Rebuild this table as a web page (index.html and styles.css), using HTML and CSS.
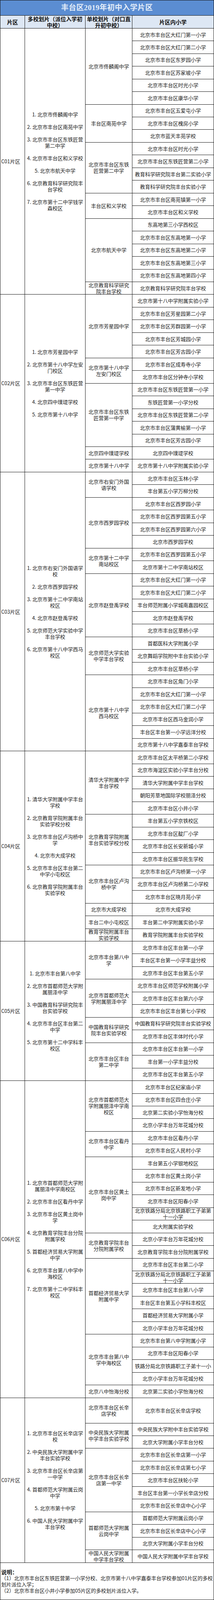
FILE: index.html
```html
<!DOCTYPE html>
<html lang="zh-CN">
<head>
<meta charset="utf-8">
<title>丰台区2019年初中入学片区</title>
<link rel="stylesheet" href="styles.css">
</head>
<body>
<div class="sheet">
<div class="grid">
<div class="title">丰台区2019年初中入学片区</div>
<div class="h col1">片区</div>
<div class="h col2">多校划片（派位入学初中校）</div>
<div class="h col3">单校划片（对口直升初中校）</div>
<div class="h col4">片区内小学</div>

<!-- C01 -->
<div class="zone s21">C01片区</div>
<div class="multi s21"><p>1. 北京市佟麟阁中学</p><p>2. 北京市丰台区南苑中学</p><p>3. 北京市丰台区东铁匠营第二中学</p><p>4. 北京市丰台区和义学校</p><p>5. 北京市航天中学</p><p>6. 北京教育科学研究院丰台学校</p><p>7. 北京市第十二中学钱学森校区</p></div>
<div class="single s6">北京市佟麟阁中学</div>
<div class="pri">北京市丰台区大红门第一小学</div>
<div class="pri">北京市丰台区大红门第二小学</div>
<div class="pri">北京市丰台区东罗园小学</div>
<div class="pri">北京市丰台区苏家坡小学</div>
<div class="pri">北京市丰台区时光小学</div>
<div class="pri">北京市丰台区康华小学</div>
<div class="single s3">丰台区南苑中学</div>
<div class="pri">北京市丰台区五爱屯小学</div>
<div class="pri">北京市丰台区槐房小学</div>
<div class="pri">北京市蓝天丰苑学校</div>
<div class="single s4">北京市丰台区东铁匠营第二中学</div>
<div class="pri">北京市丰台区时光小学</div>
<div class="pri">北京市丰台区东铁匠营第二小学</div>
<div class="pri">教育科学研究院丰台第二实验小学</div>
<div class="pri">教育科学研究院丰台实验小学</div>
<div class="single s2">丰台区和义学校</div>
<div class="pri">北京市丰台区南苑镇第一小学</div>
<div class="pri">北京市丰台区和义学校</div>
<div class="single s5">北京市航天中学</div>
<div class="pri">东高地第三小学西校区</div>
<div class="pri">北京市丰台区东高地第一小学</div>
<div class="pri">北京市丰台区东高地第二小学</div>
<div class="pri">北京市丰台区东高地第三小学</div>
<div class="pri">北京市丰台区东高地第四小学</div>
<div class="single">北京教育科学研究院丰台学校</div>
<div class="pri">北京教育科学研究院丰台学校</div>

<!-- C02 -->
<div class="zone s14">C02片区</div>
<div class="multi s14"><p>1. 北京市芳星园中学</p><p>2. 北京市第十八中学左安门校区</p><p>3. 北京市丰台区东铁匠营第一中学</p><p>4. 北京四中璞瑅学校</p><p>5. 北京市第十八中学</p></div>
<div class="single s5">北京市芳星园中学</div>
<div class="pri">北京市第十八中学附属实验小学</div>
<div class="pri">北京市丰台区芳星园第二小学</div>
<div class="pri">北京市丰台区芳群园第一小学</div>
<div class="pri">北京市丰台区芳城园小学</div>
<div class="pri">北京市丰台区芳古园小学</div>
<div class="single s2">北京市第十八中学左安门校区</div>
<div class="pri">北京市丰台区成寿寺小学</div>
<div class="pri">北京市丰台区分钟寺小学校</div>
<div class="single s5">北京市丰台区东铁匠营第一中学</div>
<div class="pri">北京市丰台区东铁匠营第一小学</div>
<div class="pri">东铁匠营第一小学分校</div>
<div class="pri">北京市丰台区东铁匠营第二小学</div>
<div class="pri">北京市丰台区蒲黄榆第一小学</div>
<div class="pri">北京市丰台区芳古园小学</div>
<div class="single">北京四中璞瑅学校</div>
<div class="pri">北京四中璞瑅学校</div>
<div class="single">北京市第十八中学</div>
<div class="pri">北京市第十八中学附属实验小学</div>

<!-- C03 -->
<div class="zone s22">C03片区</div>
<div class="multi s22"><p>1. 北京市右安门外国语学校</p><p>2. 北京市西罗园学校</p><p>3. 北京市第十二中学南站校区</p><p>4. 北京市赵登禹学校</p><p>5. 北京师范大学实验中学丰台学校</p><p>6. 北京市第十八中学西马校区</p></div>
<div class="single s2">北京市右安门外国语学校</div>
<div class="pri">北京市丰台区玉林小学</div>
<div class="pri">丰台第五小学万柳分校</div>
<div class="single s4">北京市西罗园学校</div>
<div class="pri">北京市丰台区西罗园小学</div>
<div class="pri">北京市丰台区西罗园第五小学</div>
<div class="pri">北京市丰台区西罗园第六小学</div>
<div class="pri">北京市西罗园学校</div>
<div class="single s2">北京市第十二中学南站校区</div>
<div class="pri">北京市丰台区西罗园第五小学</div>
<div class="pri">北京市第十二中学南站校区</div>
<div class="single s5">北京市赵登禹学校</div>
<div class="pri">北京市丰台区大红门第一小学</div>
<div class="pri">北京市丰台区大红门第二小学</div>
<div class="pri">丰台师范附属小学城南嘉园校区</div>
<div class="pri">北京市赵登禹学校</div>
<div class="pri">北京市丰台区草桥小学</div>
<div class="single s3">北京师范大学实验中学丰台学校</div>
<div class="pri">首都医科大学附属小学</div>
<div class="pri">北京舞蹈学院附中丰台实验小学</div>
<div class="pri">北京市丰台区草桥小学</div>
<div class="single s6">北京市第十八中学西马校区</div>
<div class="pri">北京市丰台区角门小学</div>
<div class="pri">北京市丰台区大红门第一小学</div>
<div class="pri">北京市丰台区大红门第二小学</div>
<div class="pri">北京市丰台区西马金润小学</div>
<div class="pri">丰台区丰台第一小学远洋分校</div>
<div class="pri">北京市第十八中学嘉泰丰台学校</div>

<!-- C04 -->
<div class="zone s15">C04片区</div>
<div class="multi s15"><p>1. 清华大学附属中学丰台学校</p><p>2. 北京教育学院附属丰台实验学校分校</p><p>3. 北京市丰台区卢沟桥中学</p><p>4. 北京市大成学校</p><p>5. 北京市丰台区丰台第二中学小屯校区</p><p>6. 北京教育学院附属丰台实验学校</p></div>
<div class="single s5">清华大学附属中学丰台学校</div>
<div class="pri">北京市丰台区太平桥第二小学校</div>
<div class="pri">北京市海淀区实验小学丰台分校</div>
<div class="pri">清华大学附属中学丰台学校</div>
<div class="pri">朝阳芳草地国际学校丽泽分校</div>
<div class="pri">北京市丰台区小井小学</div>
<div class="single s4">北京教育学院附属丰台实验学校分校</div>
<div class="pri">丰台第五小学京铁校区</div>
<div class="pri">北京市丰台区靛厂小学</div>
<div class="pri">北京市丰台区长安新城小学</div>
<div class="pri">北京市丰台区振华民生学校</div>
<div class="single s3">北京市丰台区卢沟桥中学</div>
<div class="pri">北京市丰台区卢沟桥第一小学</div>
<div class="pri">北京市丰台区卢沟桥第二小学校</div>
<div class="pri">北京市丰台区晓月苑小学</div>
<div class="single">北京市大成学校</div>
<div class="pri">北京市大成学校</div>
<div class="single">丰台二中小屯校区</div>
<div class="pri">丰台第二中学附属实验小学</div>
<div class="single">教育学院附属丰台实验学校</div>
<div class="pri">教育学院附属丰台实验学校</div>

<!-- C05 -->
<div class="zone s11">C05片区</div>
<div class="multi s11"><p>1. 北京市丰台第八中学</p><p>2. 北京市首都师范大学附属丽泽中学</p><p>3. 中国教育科学研究院丰台实验学校</p><p>4. 北京市丰台区丰台第二中学</p><p>5. 北京市第十二中学科丰校区</p></div>
<div class="single s3">北京市丰台第八中学</div>
<div class="pri">北京市丰台区丰台第一小学</div>
<div class="pri">丰台区丰台第一小学丰益分校</div>
<div class="pri">北京市丰台区丰台第五小学</div>
<div class="single s3">北京市首都师范大学附属丽泽中学</div>
<div class="pri">北京市丰台区师范学校附属小学</div>
<div class="pri">北京市丰台区丰台第六小学</div>
<div class="pri">北京市丰台区丰台第七小学校</div>
<div class="single s2">中国教育科学研究院丰台实验学校</div>
<div class="pri">中国教育科学研究院丰台实验学校</div>
<div class="pri">北京市丰台区丰体时代小学</div>
<div class="single s3">北京市丰台区丰台第二中学</div>
<div class="pri">北京市丰台区丰台第一小学</div>
<div class="pri">丰台第一小学丰益分校</div>
<div class="pri">北京市丰台区丰台第五小学</div>

<!-- C06 -->
<div class="zone s25">C06片区</div>
<div class="multi s25"><p>1. 北京市首都师范大学附属丽泽中学南校区</p><p>2. 北京市丰台区看丹中学</p><p>3. 北京市丰台区黄土岗中学</p><p>4. 北京教育学院丰台分院附属学校</p><p>5. 首都经济贸易大学附属中学</p><p>6. 北京市丰台第八中学中海校区</p><p>7. 北京市第十二中学科丰校区</p></div>
<div class="single s4">北京市首都师范大学附属丽泽中学南校区</div>
<div class="pri">北京市丰台区纪家庙小学</div>
<div class="pri">北京市丰台区四合庄小学</div>
<div class="pri">北京第二实验小学怡海分校</div>
<div class="pri">北京小学丰台万年花城分校</div>
<div class="single s2">北京市丰台区看丹中学</div>
<div class="pri">北京市丰台区看丹小学</div>
<div class="pri">北京市丰台区人民村小学</div>
<div class="single s6">北京市丰台区黄土岗中学</div>
<div class="pri">丰台第五小学银地校区</div>
<div class="pri">北京市丰台区黄土岗小学</div>
<div class="pri">北京市丰台区新发地小学</div>
<div class="pri">北京市丰台区阳春小学</div>
<div class="pri">北京铁路分局北京铁路职工子弟第十一小学</div>
<div class="pri">北大附属实验学校</div>
<div class="single s2">北京教育学院丰台分院附属学校</div>
<div class="pri">北京小学丰台万年花城分校</div>
<div class="pri">北京教育学院丰台分院附属学校</div>
<div class="single s6">首都经济贸易大学附属中学</div>
<div class="pri">北京市丰台区丰台第二小学</div>
<div class="pri">北京铁路分局北京铁路职工子弟第十一小学</div>
<div class="pri">北京市丰台区丰台第八小学</div>
<div class="pri">丰台区丰台第五小学科丰校区</div>
<div class="pri">首都经济贸易大学附属小学</div>
<div class="pri">北京小学丰台万年花城分校</div>
<div class="single s4">北京市丰台第八中学中海校区</div>
<div class="pri">北京市丰台第八中学附属小学</div>
<div class="pri">北京市丰台区阳春小学</div>
<div class="pri">铁路分局北京铁路职工子弟十一小</div>
<div class="pri">北京小学丰台万年花城分校</div>
<div class="single">北京八中怡海分校</div>
<div class="pri">北京第二实验小学怡海分校</div>

<!-- C07 -->
<div class="zone s13">C07片区</div>
<div class="multi s13"><p>1. 北京市丰台区长辛店学校</p><p>2. 中央民族大学附属中学丰台实验学校</p><p>3. 北京市丰台区长辛店第一中学</p><p>4. 首都师范大学附属云岗中学</p><p>5. 北京市第十中学</p><p>6. 中国人民大学附属中学丰台学校</p></div>
<div class="single s2">北京市丰台区长辛店学校</div>
<div class="pri s2">北京市丰台区长辛店学校</div>
<div class="single s2">中央民族大学附属中学丰台实验学校</div>
<div class="pri">中央民族大学附中丰台实验学校</div>
<div class="pri">北京大学附属小学丰台分校</div>
<div class="single s5">北京市丰台区长辛店第一中学</div>
<div class="pri">北京市丰台区长辛店第一小学</div>
<div class="pri">北京市丰台区长辛店第七小学</div>
<div class="pri">北京市丰台区扶轮小学</div>
<div class="pri">丰台区丰台第一小学长辛店分校</div>
<div class="pri">北京市丰台区长辛店中心小学</div>
<div class="single s3">首都师范大学附属云岗中学</div>
<div class="pri">首都师范大学附属云岗小学</div>
<div class="pri">北京市丰台区长辛店中心小学</div>
<div class="pri">北京大学附属小学丰台分校</div>
<div class="single">中国人民大学附属中学丰台学校</div>
<div class="pri">中国人民大学附属中学丰台学校</div>
</div>

<div class="notes">
<p class="note-title">说明：</p>
<p>（1）北京市丰台区东铁匠营第一小学分校、北京市第十八中学嘉泰丰台学校参加01片区的多校<br>划片派位入学；</p>
<p>（2）北京市丰台区小井小学参加05片区的多校划片派位入学。</p>
</div>
</div>
</body>
</html>
```

FILE: styles.css
```css
html, body {
  margin: 0;
  padding: 0;
  background: #ffffff;
  overflow: hidden;
}

body {
  font-family: "Noto Sans CJK SC", "Noto Sans", sans-serif;
  font-size: 13px;
  line-height: 16px;
  color: #222222;
}

/* the sheet fills the window height; rows share it in proportion */
.sheet {
  width: 548px;
  height: 100vh;
  display: flex;
  flex-direction: column;
}

.grid {
  flex: 1 1 0;
  min-height: 0;
  display: grid;
  grid-template-columns: 62px 154px 119px 208px;
  grid-template-rows: minmax(0, 39fr) minmax(0, 32fr);
  grid-auto-rows: minmax(0, 32fr);
  gap: 1px;
  padding: 1px;
  background: #151515;
}

.grid > div {
  background: #ffffff;
  display: flex;
  align-items: center;
  justify-content: center;
  text-align: center;
  min-width: 0;
  min-height: 0;
}

.title {
  grid-column: 1 / -1;
  background: #5b8dd2 !important;
  color: #e4edf9;
  font-family: "Liberation Serif", "Noto Sans CJK SC", serif;
  font-size: 19px;
  font-weight: bold;
  letter-spacing: 0.5px;
}

.h {
  background: #dde7f4 !important;
  color: #111111;
  font-size: 14px;
  font-weight: bold;
  padding: 0 2px;
}

.col1 { grid-column: 1; }
.col2 { grid-column: 2; }
.col3 { grid-column: 3; }
.col4 { grid-column: 4; }

.zone {
  grid-column: 1;
  justify-content: flex-start !important;
  text-align: left !important;
  padding-left: 2px;
}

.multi {
  grid-column: 2;
  flex-direction: column;
  align-items: stretch !important;
  padding: 0 4px;
}

.multi p {
  margin: 0 0 16px 0;
}

.multi p:last-child {
  margin-bottom: 0;
}

.single {
  grid-column: 3;
  padding: 0 5px;
}

.pri {
  grid-column: 4;
  padding: 0 2px;
}

.s2 { grid-row: span 2; }
.s3 { grid-row: span 3; }
.s4 { grid-row: span 4; }
.s5 { grid-row: span 5; }
.s6 { grid-row: span 6; }
.s11 { grid-row: span 11; }
.s13 { grid-row: span 13; }
.s14 { grid-row: span 14; }
.s15 { grid-row: span 15; }
.s21 { grid-row: span 21; }
.s22 { grid-row: span 22; }
.s25 { grid-row: span 25; }

.notes {
  flex: 0 0 auto;
  box-sizing: border-box;
  height: calc(100vh * 97 / 4164);
  border: 1px solid #151515;
  border-top: none;
  padding: 0 0 0 2px;
  display: flex;
  flex-direction: column;
  justify-content: center;
  white-space: nowrap;
  overflow: hidden;
}

.notes p {
  margin: 0;
}

.note-title {
  font-weight: bold;
  font-size: 14px;
}
```
